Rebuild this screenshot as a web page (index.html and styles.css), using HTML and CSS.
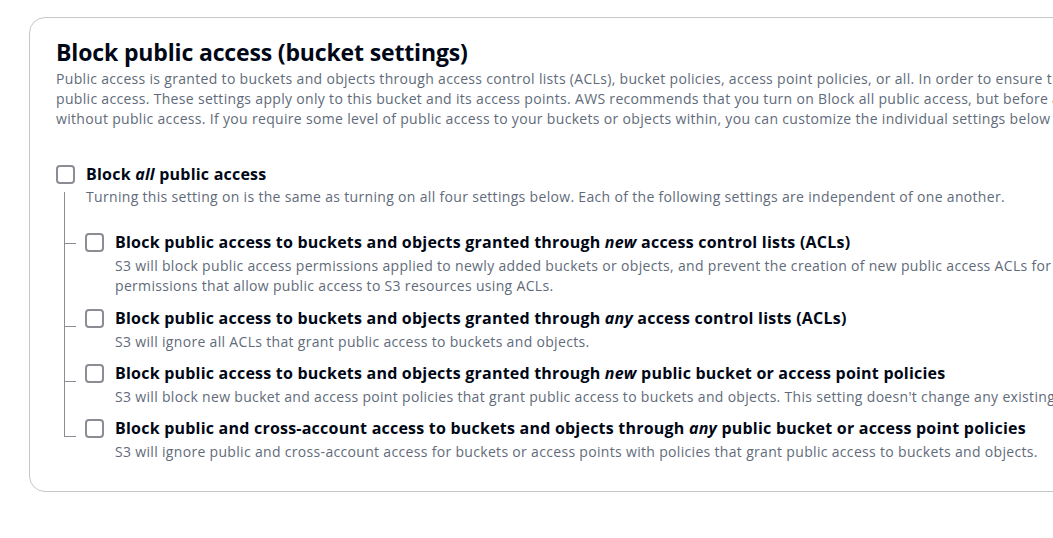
FILE: index.html
```html
<!DOCTYPE html>
<html lang="en">
<head>
<meta charset="utf-8">
<title>Block public access (bucket settings)</title>
<link rel="stylesheet" href="styles.css">
</head>
<body>
<section class="card">
  <h2 class="title">Block public access (bucket settings)</h2>
  <p class="intro">Public access is granted to buckets and objects through access control lists (ACLs), bucket policies, access point policies, or all. In order to ensure that public access to this bucket and its objects is blocked, turn on Block all<br>public access. These settings apply only to this bucket and its access points. AWS recommends that you turn on Block all public access, but before applying any of these settings, ensure that your applications will work correctly<br>without public access. If you require some level of public access to your buckets or objects within, you can customize the individual settings below to suit your specific storage use cases. Learn more</p>

  <div class="opt opt-main">
    <input type="checkbox" class="cb">
    <div class="label">Block <i>all</i> public access</div>
    <div class="hint hint-main">Turning this setting on is the same as turning on all four settings below. Each of the following settings are independent of one another.</div>
  </div>

  <div class="tree">
    <div class="opt sub stub-hi">
      <input type="checkbox" class="cb">
      <div class="label">Block public access to buckets and objects granted through <i>new</i> access control lists (ACLs)</div>
      <div class="hint">S3 will block public access permissions applied to newly added buckets or objects, and prevent the creation of new public access ACLs for existing buckets and objects. This setting doesn't change any existing<br>permissions that allow public access to S3 resources using ACLs.</div>
    </div>
    <div class="opt sub">
      <input type="checkbox" class="cb">
      <div class="label">Block public access to buckets and objects granted through <i>any</i> access control lists (ACLs)</div>
      <div class="hint">S3 will ignore all ACLs that grant public access to buckets and objects.</div>
    </div>
    <div class="opt sub">
      <input type="checkbox" class="cb">
      <div class="label">Block public access to buckets and objects granted through <i>new</i> public bucket or access point policies</div>
      <div class="hint">S3 will block new bucket and access point policies that grant public access to buckets and objects. This setting doesn't change any existing policies that allow public access to S3 resources.</div>
    </div>
    <div class="opt sub">
      <input type="checkbox" class="cb">
      <div class="label">Block public and cross-account access to buckets and objects through <i>any</i> public bucket or access point policies</div>
      <div class="hint">S3 will ignore public and cross-account access for buckets or access points with policies that grant public access to buckets and objects.</div>
    </div>
  </div>
</section>
</body>
</html>
```
FILE: styles.css
```css
html, body {
  margin: 0;
  background: #ffffff;
  overflow: hidden;
}

.card {
  margin: 17px 0 0 29px;
  width: 1400px;
  border: 1px solid #c6c6cd;
  border-radius: 16px;
  padding: 19px 26px 29px;
  font-family: "Open Sans", "Noto Sans", sans-serif;
  white-space: nowrap;
  color: #000716;
}

.title {
  margin: 0;
  font-size: 23px;
  line-height: 30px;
  font-weight: 700;
  letter-spacing: -0.15px;
  color: #000716;
}

.intro {
  margin: 2px 0 0;
  font-size: 14px;
  line-height: 20px;
  letter-spacing: 0.32px;
  color: #5f6b7a;
}

.opt {
  display: grid;
  grid-template-columns: 18px auto;
  column-gap: 12px;
  justify-content: start;
}

.opt-main {
  margin-top: 34px;
}

.cb {
  appearance: none;
  -webkit-appearance: none;
  grid-row: 1 / span 2;
  width: 19px;
  height: 19px;
  margin: 2px 0 0 -0.5px;
  box-sizing: border-box;
  border: 2px solid #8c8c94;
  border-radius: 4px;
  background: #ffffff;
}

.label {
  font-size: 16px;
  line-height: 22px;
  font-weight: 700;
  letter-spacing: 0.22px;
  color: #000716;
}

.hint {
  margin-top: 3px;
  font-size: 14px;
  line-height: 20px;
  letter-spacing: 0.32px;
  color: #5f6b7a;
}

.hint-main {
  margin-top: 2px;
}

.tree {
  position: relative;
  margin-top: 24px;
  padding-left: 29px;
  display: flex;
  flex-direction: column;
  gap: 10px;
}

.tree::before {
  content: "";
  position: absolute;
  left: 8px;
  top: -39px;
  bottom: 25px;
  width: 1px;
  background: #8c8c94;
}

.sub {
  position: relative;
}

.sub::before {
  content: "";
  position: absolute;
  left: -21px;
  top: 19px;
  width: 12px;
  height: 1px;
  background: #8c8c94;
}

.sub.stub-hi::before {
  top: 12px;
}

.sub.stub-hi {
  margin-bottom: 1px;
}
```
